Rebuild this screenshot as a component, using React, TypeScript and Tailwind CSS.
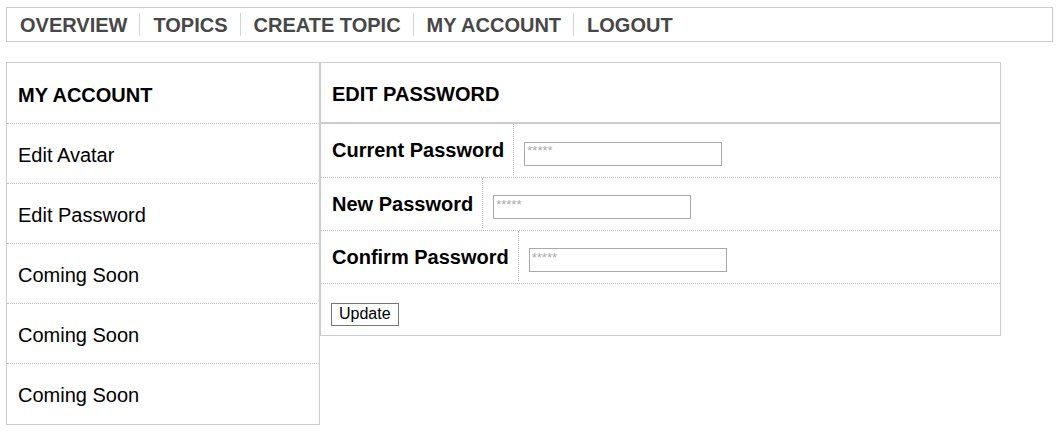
import React from 'react';

const navItems = ['OVERVIEW', 'TOPICS', 'CREATE TOPIC', 'MY ACCOUNT', 'LOGOUT'];

const sideItems = ['Edit Avatar', 'Edit Password', 'Coming Soon', 'Coming Soon', 'Coming Soon'];

const fields = [
  { label: 'Current Password', h: 'h-[54px]' },
  { label: 'New Password', h: 'h-[53px]' },
  { label: 'Confirm Password', h: 'h-[53px]' },
];

const App: React.FC = () => {
  return (
    <div className="min-h-screen bg-white pt-[7px] pl-[6px] font-['Liberation_Sans',Arial,sans-serif]">
      {/* top nav */}
      <div className="w-[1047px] h-[35px] border border-[#ccc] flex items-center">
        {navItems.map((item, i) => (
          <div
            key={item}
            className={`pl-[13px] pr-[12px] h-[23px] flex items-center text-[20px] font-bold text-[#474747] leading-none ${
              i > 0 ? 'border-l border-[#d4d4d4]' : ''
            }`}
          >
            {item}
          </div>
        ))}
      </div>

      <div className="flex items-start mt-[20px]">
        {/* sidebar */}
        <div className="w-[314px] border border-[#ccc]">
          <div className="h-[61px] pl-[11px] pt-[3px] flex items-center text-[20px] font-bold text-black border-b border-dotted border-[#bbb] mr-[2px]">
            MY ACCOUNT
          </div>
          {sideItems.map((item, i) => (
            <div
              key={i}
              className={`h-[60px] pl-[11px] pt-[2px] mr-[2px] flex items-center text-[20px] text-black ${
                i < sideItems.length - 1 ? 'border-b border-dotted border-[#bbb]' : ''
              }`}
            >
              {item}
            </div>
          ))}
        </div>

        {/* edit password */}
        <div className="w-[681px] border border-[#ccc]">
          <div className="h-[61px] pl-[11px] pt-[3px] flex items-center text-[20px] font-bold text-black border-b-2 border-[#ccc]">
            EDIT PASSWORD
          </div>
          {fields.map((f) => (
            <div key={f.label} className={`${f.h} flex items-stretch border-b border-dotted border-[#bbb]`}>
              <div className="pl-[11px] pr-[9px] pt-[1px] mb-[2px] flex items-center text-[20px] font-bold text-black border-r border-dotted border-[#bbb]">
                {f.label}
              </div>
              <div className="pl-[10px] flex items-center pt-[6px]">
                <input
                  type="password"
                  placeholder="*****"
                  className="w-[198px] h-[24px] border border-[#a9a9a9] px-[2px] pb-[6px] text-[13px] placeholder:text-[#aaa] outline-none"
                />
              </div>
            </div>
          ))}
          <div className="h-[51px] pl-[10px] pt-[18px]">
            <button className="h-[23px] px-[7px] border border-[#767676] bg-white text-[16px] text-black leading-none">
              Update
            </button>
          </div>
        </div>
      </div>
    </div>
  );
};

export default App;
